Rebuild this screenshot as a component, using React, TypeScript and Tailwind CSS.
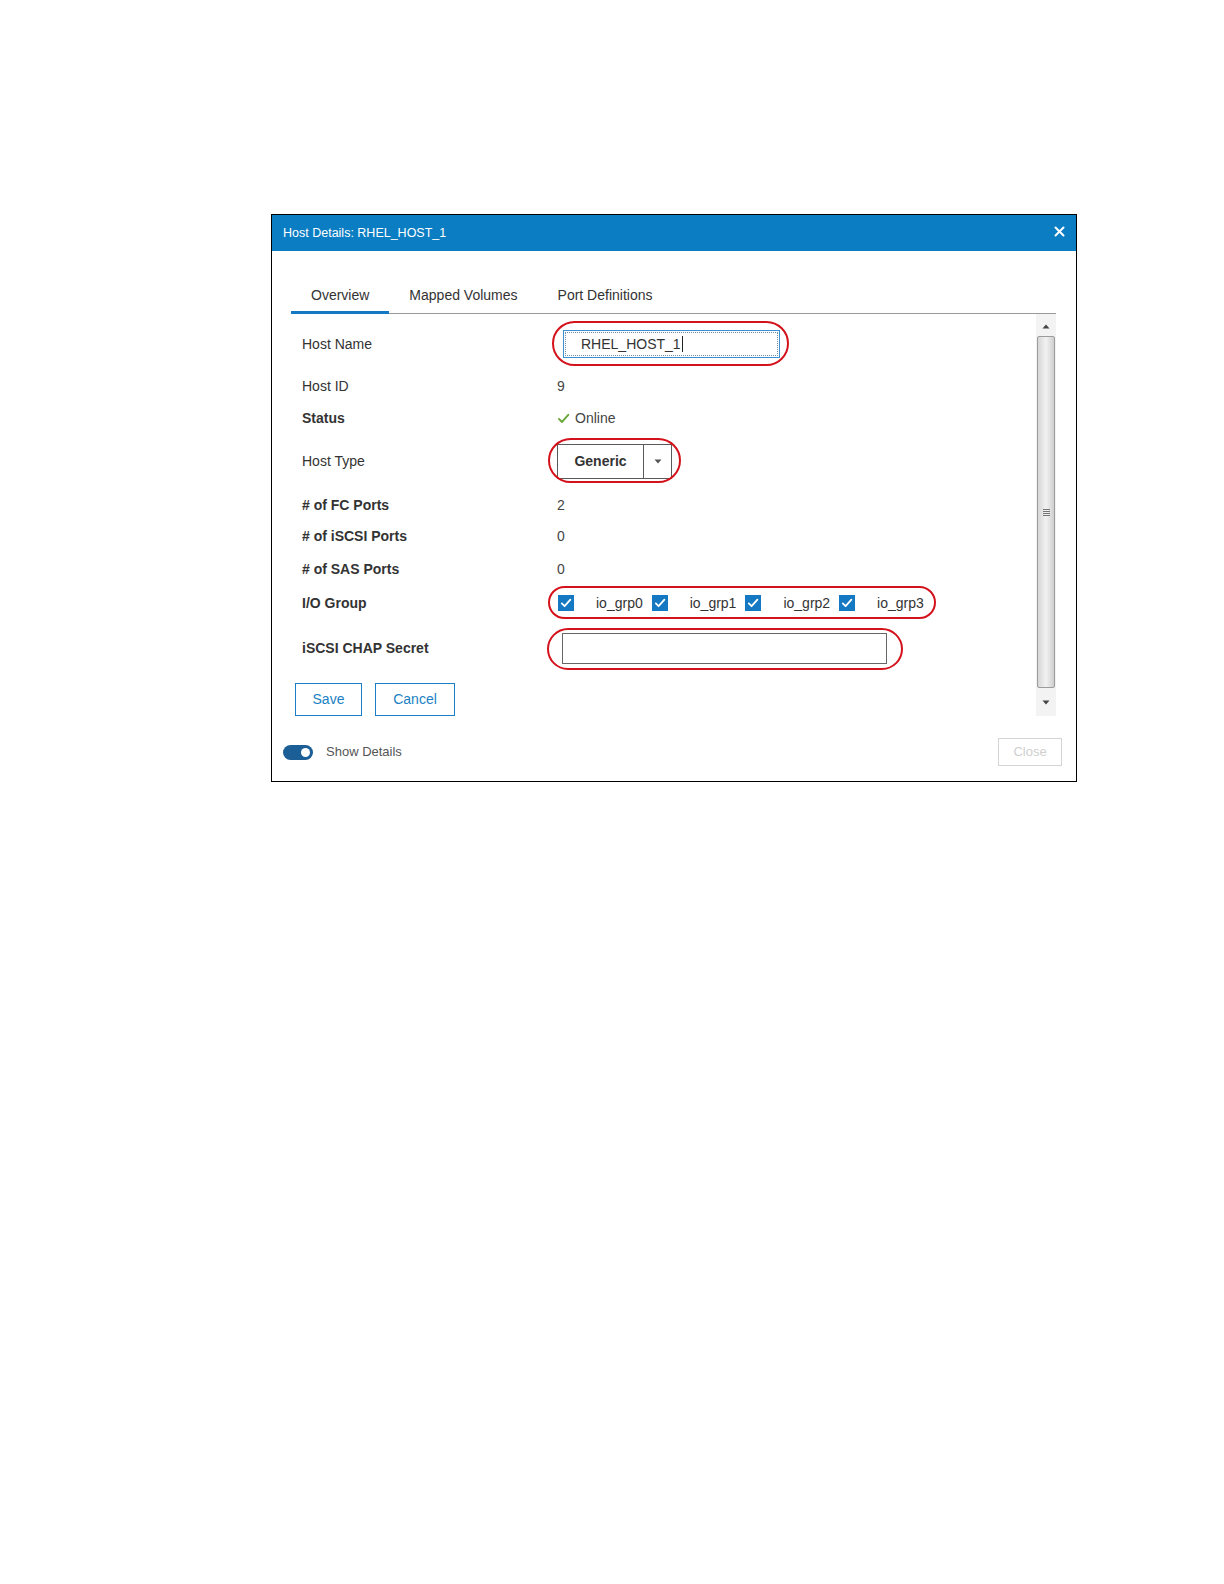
import React from "react";

const font = { fontFamily: '"Liberation Sans", Arial, sans-serif' };

function Ellipse({ cls }: { cls: string }) {
  return <div className={`pointer-events-none absolute rounded-full border-2 border-[#d4121b] ${cls}`} />;
}

function Check({ color = "#ffffff", size = 12 }: { color?: string; size?: number }) {
  return (
    <svg width={size} height={size} viewBox="0 0 12 12" fill="none">
      <path d="M1.8 6.4 L4.6 9.2 L10.4 2.6" stroke={color} strokeWidth="1.8" strokeLinecap="round" strokeLinejoin="round" />
    </svg>
  );
}

function Box() {
  return (
    <div className="flex h-[16px] w-[16px] items-center justify-center bg-[#1479c2]">
      <Check />
    </div>
  );
}

function Row({ label, bold, h, children }: { label: string; bold?: boolean; h: string; children?: React.ReactNode }) {
  return (
    <div className={`flex items-center pl-[11px] ${h}`}>
      <div className={`w-[255px] shrink-0 text-[14px] text-[#333] ${bold ? "font-bold" : "font-normal"}`}>{label}</div>
      <div className="flex items-center text-[14px] text-[#444]">{children}</div>
    </div>
  );
}

export default function App() {
  return (
    <div className="bg-white pt-[214px] pl-[271px] pb-[20px]" style={font}>
      <div className="box-border flex h-[568px] w-[806px] flex-col border border-black bg-white">
        {/* header */}
        <div className="flex h-[36px] shrink-0 items-center justify-between bg-[#0b7dc2] pl-[11px] pr-[11px]">
          <span className="text-[12.5px] text-white">Host Details: RHEL_HOST_1</span>
          <svg width="11" height="11" viewBox="0 0 11 11" className="mb-[4px]">
            <path d="M1.5 1.5 L9.5 9.5 M9.5 1.5 L1.5 9.5" stroke="#ffffff" strokeWidth="2" strokeLinecap="round" />
          </svg>
        </div>

        {/* tabs */}
        <div className="ml-[19px] mr-[20px] flex border-b border-[#9a9a9a]">
          <div className="-mb-[1px] border-b-[3px] border-[#1479c2] px-[20px] pt-[36px] pb-[7px] text-[14px] leading-[17px] text-[#333]">Overview</div>
          <div className="-mb-[1px] border-b-[3px] border-transparent px-[20px] pt-[36px] pb-[7px] text-[14px] leading-[17px] text-[#333]">Mapped Volumes</div>
          <div className="-mb-[1px] border-b-[3px] border-transparent px-[20px] pt-[36px] pb-[7px] text-[14px] leading-[17px] text-[#333]">Port Definitions</div>
        </div>

        {/* body */}
        <div className="ml-[19px] mr-[20px] flex h-[402px]">
          <div className="flex-1 pt-[9px]">
            <Row label="Host Name" h="h-[42px]">
              <div className="relative ml-[6px]">
                <div className="box-border flex h-[28px] w-[217px] items-center border border-[#3d8fd0] p-[1px]">
                  <div className="flex h-full w-full items-center border border-dotted border-[#6a8fb0] pl-[15px] text-[14px] text-[#333]">
                    RHEL_HOST_1<span className="ml-[1px] inline-block h-[16px] w-[1px] bg-[#222]" />
                  </div>
                </div>
                <Ellipse cls="-left-[11px] -right-[9px] -top-[9px] -bottom-[8px]" />
              </div>
            </Row>
            <Row label="Host ID" h="h-[42px]">9</Row>
            <Row label="Status" bold h="h-[22px]">
              <span className="mr-[5px] mt-[1px]"><Check color="#6aa63a" size={13} /></span>Online
            </Row>
            <Row label="Host Type" h="h-[64px]">
              <div className="relative">
                <div className="box-border flex h-[35px] w-[115px] border border-[#5a5a5a]">
                  <div className="flex w-[86px] items-center justify-center border-r border-[#5a5a5a] text-[14px] font-bold text-[#333]">Generic</div>
                  <div className="flex flex-1 items-center justify-center">
                    <svg width="8" height="5" viewBox="0 0 8 5"><path d="M0.5 0.5 L7.5 0.5 L4 4.5 Z" fill="#555" /></svg>
                  </div>
                </div>
                <Ellipse cls="-left-[9px] -right-[9px] -top-[6px] -bottom-[4px]" />
              </div>
            </Row>
            <Row label="# of FC Ports" bold h="h-[24px]">2</Row>
            <Row label="# of iSCSI Ports" bold h="h-[38px]">0</Row>
            <Row label="# of SAS Ports" bold h="h-[28px]">0</Row>
            <Row label="I/O Group" bold h="h-[40px]">
              <div className="relative ml-[1px] flex items-center gap-[9px]">
                <div className="flex items-center"><Box /><span className="ml-[22px] text-[14px] text-[#333]">io_grp0</span></div>
                <div className="flex items-center"><Box /><span className="ml-[22px] text-[14px] text-[#333]">io_grp1</span></div>
                <div className="flex items-center"><Box /><span className="ml-[22px] text-[14px] text-[#333]">io_grp2</span></div>
                <div className="flex items-center"><Box /><span className="ml-[22px] text-[14px] text-[#333]">io_grp3</span></div>
                <Ellipse cls="-left-[10px] -right-[12px] -top-[7px] -bottom-[5px]" />
              </div>
            </Row>
            <Row label="iSCSI CHAP Secret" bold h="h-[50px]">
              <div className="relative ml-[5px]">
                <div className="box-border h-[31px] w-[325px] border-[1.5px] border-[#666]" />
                <Ellipse cls="-left-[15px] -right-[16px] -top-[5px] -bottom-[6px]" />
              </div>
            </Row>
            <div className="ml-[4px] mt-[10px] flex gap-[13px]">
              <div className="box-border flex h-[33px] w-[67px] items-center justify-center border-[1.5px] border-[#1a7fc4] text-[14px] text-[#1a7fc4]">Save</div>
              <div className="box-border flex h-[33px] w-[80px] items-center justify-center border-[1.5px] border-[#1a7fc4] text-[14px] text-[#1a7fc4]">Cancel</div>
            </div>
          </div>

          {/* scrollbar */}
          <div className="flex w-[20px] flex-col bg-[#f3f3f3] pt-[2px]">
            <div className="flex h-[20px] items-center justify-center">
              <svg width="8" height="5" viewBox="0 0 8 5"><path d="M0.5 4.5 L7.5 4.5 L4 0.5 Z" fill="#444" /></svg>
            </div>
            <div className="mx-[1px] flex h-[352px] items-center justify-center rounded-[2px] border border-[#9c9c9c] bg-gradient-to-r from-[#d6d6d6] via-[#f2f2f2] to-[#cfcfcf]">
              <div className="flex flex-col gap-[1px]">
                <div className="h-[1px] w-[7px] bg-[#777]" />
                <div className="h-[1px] w-[7px] bg-[#777]" />
                <div className="h-[1px] w-[7px] bg-[#777]" />
                <div className="h-[1px] w-[7px] bg-[#777]" />
              </div>
            </div>
            <div className="flex flex-1 items-center justify-center">
              <svg width="8" height="5" viewBox="0 0 8 5"><path d="M0.5 0.5 L7.5 0.5 L4 4.5 Z" fill="#444" /></svg>
            </div>
          </div>
        </div>

        {/* footer */}
        <div className="flex h-[62px] items-center justify-between pl-[11px] pr-[14px] pt-[10px]">
          <div className="flex items-center">
            <div className="relative h-[15px] w-[30px] rounded-full bg-[#1c5e96]">
              <div className="absolute right-[3px] top-[3px] h-[9px] w-[9px] rounded-full bg-white" />
            </div>
            <span className="ml-[13px] text-[13px] text-[#555]">Show Details</span>
          </div>
          <div className="box-border flex h-[28px] w-[64px] items-center justify-center border border-[#d4d4d4] text-[13px] text-[#cfcfcf]">Close</div>
        </div>
      </div>
    </div>
  );
}
